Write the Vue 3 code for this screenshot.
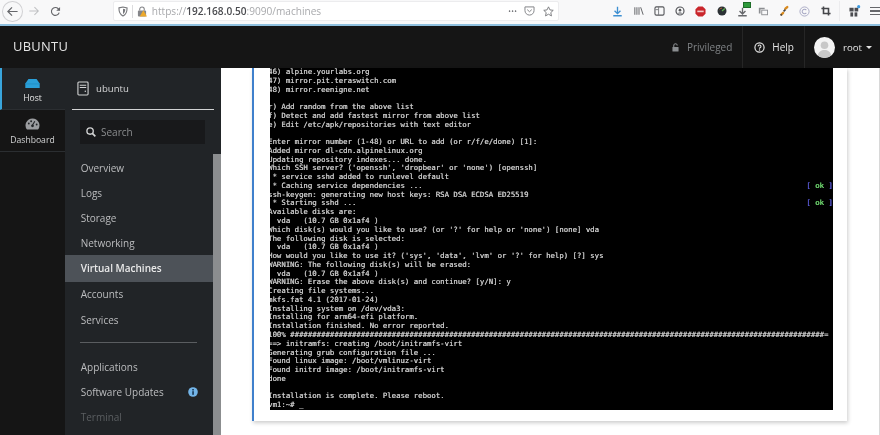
<script setup>
const nav1 = ['Overview', 'Logs', 'Storage', 'Networking']
const nav2 = ['Accounts', 'Services']
const hash = '#'.repeat(121)
const raw = [
  '46) alpine.yourlabs.org',
  '47) mirror.pit.teraswitch.com',
  '48) mirror.reenigne.net',
  '',
  'r) Add random from the above list',
  'f) Detect and add fastest mirror from above list',
  'e) Edit /etc/apk/repositories with text editor',
  '',
  'Enter mirror number (1-48) or URL to add (or r/f/e/done) [1]:',
  'Added mirror dl-cdn.alpinelinux.org',
  'Updating repository indexes... done.',
  "Which SSH server? ('openssh', 'dropbear' or 'none') [openssh]",
  ' * service sshd added to runlevel default',
  { t: ' * Caching service dependencies ...', ok: true },
  'ssh-keygen: generating new host keys: RSA DSA ECDSA ED25519',
  { t: ' * Starting sshd ...', ok: true },
  'Available disks are:',
  '  vda   (10.7 GB 0x1af4 )',
  "Which disk(s) would you like to use? (or '?' for help or 'none') [none] vda",
  'The following disk is selected:',
  '  vda   (10.7 GB 0x1af4 )',
  "How would you like to use it? ('sys', 'data', 'lvm' or '?' for help) [?] sys",
  'WARNING: The following disk(s) will be erased:',
  '  vda   (10.7 GB 0x1af4 )',
  'WARNING: Erase the above disk(s) and continue? [y/N]: y',
  'Creating file systems...',
  'mkfs.fat 4.1 (2017-01-24)',
  'Installing system on /dev/vda3:',
  'Installing for arm64-efi platform.',
  'Installation finished. No error reported.',
  '100% ' + hash + '=',
  '==> initramfs: creating /boot/initramfs-virt',
  'Generating grub configuration file ...',
  'Found linux image: /boot/vmlinuz-virt',
  'Found initrd image: /boot/initramfs-virt',
  'done',
  '',
  'Installation is complete. Please reboot.',
  'vm1:~# _'
]
const lines = raw.map((l) => {
  const o = typeof l === 'string' ? { t: l, ok: false } : l
  return { text: o.ok ? o.t.padEnd(122, ' ') : o.t, ok: o.ok }
})
</script>

<template>
  <div class="page">
    <header class="toolbar">
      <div class="back">
        <svg width="13" height="13" viewBox="0 0 14 14"><path d="M12.5 7H2M6.5 2.5 2 7l4.5 4.5" fill="none" stroke="#66676b" stroke-width="1.300"/></svg>
      </div>
      <div class="tool fwd">
        <svg width="12" height="12" viewBox="0 0 14 14"><path d="M1.5 7H12M7.5 2.5 12 7l-4.5 4.5" fill="none" stroke="#bfc0c3" stroke-width="1.200"/></svg>
      </div>
      <div class="tool reload">
        <svg width="11" height="11" viewBox="0 0 12 12"><path d="M10 7.2A4.3 4.3 0 1 1 9 3l1.400 1.400" fill="none" stroke="#66676b" stroke-width="1.200"/><path d="M11 1v4.200H6.800z" fill="#66676b"/></svg>
      </div>
      <div class="urlbar">
        <svg class="shield" width="10" height="11" viewBox="0 0 11 12"><path d="M1 2 5.500 1 10 2c0 4-1 7.500-4.500 9C2 9.500 1 6 1 2Z" fill="none" stroke="#77787c" stroke-width="1.200"/><path d="M5.500 3 8 3.500C8 6 7.200 7.700 5.500 8.700Z" fill="#77787c"/></svg>
        <span class="sep"></span>
        <svg class="lock" width="10" height="11" viewBox="0 0 11 12"><path d="M3 5V3.500a2.500 2.500 0 0 1 5 0V5" fill="none" stroke="#85868a" stroke-width="1.200"/><rect x="1" y="5" width="9" height="6.500" rx="1" fill="#85868a"/><path d="M7 4.500 11 11.500H3Z" fill="#eda92b"/></svg>
        <span class="url"><span class="dim">https://</span><span class="host">192.168.0.50</span><span class="dim">:9090/machines</span></span>
        <span class="spacer"></span>
        <span class="dots">•••</span>
        <svg class="pocket" width="11" height="10" viewBox="0 0 12 11"><path d="M1 1h10v4a5 5 0 0 1-10 0Z" fill="none" stroke="#85868a" stroke-width="1.100"/><path d="M3.500 4 6 6.300 8.500 4" fill="none" stroke="#85868a" stroke-width="1.100"/></svg>
        <svg class="star" width="11" height="11" viewBox="0 0 13 13"><path d="m6.500 1 1.700 3.600 3.900.5-2.900 2.700.8 3.900-3.500-2-3.500 2 .8-3.900L.9 5.100l3.900-.5Z" fill="none" stroke="#77787c" stroke-width="1.100"/></svg>
      </div>
      <div class="exts">
        <span class="ext"><svg width="11" height="11" viewBox="0 0 13 13"><path d="M6.500 1v8M3 5.500l3.500 3.500L10 5.500M1.500 11.500h10" fill="none" stroke="#3d8fd1" stroke-width="1.600"/></svg></span>
        <span class="ext"><svg width="10" height="10" viewBox="0 0 12 11"><path d="M1 1v9M3.500 1v9M6 1v9M8 1l3 9" fill="none" stroke="#66676b" stroke-width="1.200"/></svg></span>
        <span class="ext"><svg width="11" height="10" viewBox="0 0 12 11"><rect x="1" y="1" width="10" height="9" rx="1.500" fill="none" stroke="#55565a" stroke-width="1.200"/><path d="M5 1v9M1.500 4h3.500" stroke="#77787c" stroke-width="1"/></svg></span>
        <span class="ext"><svg width="10" height="10" viewBox="0 0 12 12"><circle cx="6" cy="6" r="4.800" fill="none" stroke="#55565a" stroke-width="1.400"/><circle cx="6" cy="5" r="1.600" fill="#55565a"/><path d="M3.300 9c.6-1.600 4.800-1.600 5.400 0" fill="#55565a"/></svg></span>
        <span class="ext"><svg width="11" height="11" viewBox="0 0 12 12"><path d="M3.600 .5h4.800L11.500 3.600v4.800L8.400 11.500H3.600L.5 8.400V3.600Z" fill="#c9252b"/><rect x="2.500" y="5" width="7" height="1.800" fill="#f3c9c9"/></svg></span>
        <span class="ext"><svg width="10" height="10" viewBox="0 0 12 12"><circle cx="6" cy="6" r="5.400" fill="#2a3034"/><path d="M6 6 9.500 3" stroke="#5fb04f" stroke-width="1.400"/><path d="M3 4a4 4 0 0 1 3-1.500" fill="none" stroke="#c9703a"/></svg></span>
        <span class="ext"><svg width="11" height="11" viewBox="0 0 13 13"><path d="M6.500 2v7M3 6l3.500 3.500L10 6M1.500 11.500h10" fill="none" stroke="#66676b" stroke-width="1.600"/></svg><i class="badge"></i></span>
        <span class="ext"><svg width="10" height="10" viewBox="0 0 12 12"><path d="M1 2h7v2H3v5H1Z" fill="#8c8e92"/><rect x="4.500" y="5" width="7" height="5.500" fill="none" stroke="#8c8e92" stroke-width="1.100"/></svg></span>
        <span class="ext"><svg width="11" height="12" viewBox="0 0 12 13"><path d="M4.500 8.500 2.700 10.300M7 4 9 2.200" stroke="#d98a1f" stroke-width="2.600" stroke-linecap="round"/><path d="M3 11.500 1.800 10M5 7l2-2" stroke="#444" stroke-width="1.800"/></svg></span>
        <span class="ext"><svg width="11" height="11" viewBox="0 0 12 12"><circle cx="6" cy="6" r="5" fill="none" stroke="#a7a8c4" stroke-width="1"/><path d="M8 4.500a2.500 2.500 0 1 0 0 3" fill="none" stroke="#a7a8c4" stroke-width="1.100"/></svg></span>
        <span class="ext"><svg width="10" height="10" viewBox="0 0 12 12"><path d="M3 .5V9h8.500M.5 3H9v8.500" fill="none" stroke="#45464a" stroke-width="1.900"/></svg></span>
      </div>
      <span class="tool-sep"></span>
      <span class="puzzle"><svg width="12" height="12" viewBox="0 0 13 13"><rect x="0.500" y="3" width="4.500" height="4" fill="#4b4c50"/><rect x="6" y="3" width="4" height="4" fill="#4b4c50"/><rect x="1.500" y="8" width="3" height="4.500" fill="#4b4c50"/><rect x="6" y="8" width="3" height="4.500" fill="#4b4c50"/><circle cx="10.500" cy="1.800" r="1.700" fill="#3d9ae0"/></svg></span>
      <span class="burger"><i></i><i></i><i></i></span>
    </header>

    <div class="masthead">
      <span class="brand">UBUNTU</span>
      <span class="spacer"></span>
      <div class="m-item priv">
        <svg width="7" height="9" viewBox="0 0 8 10"><path d="M2 4.500V2.700a2 2 0 0 1 4 0" fill="none" stroke="#8a8d90" stroke-width="1.200"/><rect x="0.500" y="4.500" width="7" height="5" rx=".6" fill="#8a8d90"/></svg>
        <span>Privileged</span>
      </div>
      <div class="m-item help">
        <svg width="11" height="11" viewBox="0 0 12 12"><circle cx="6" cy="6" r="5" fill="none" stroke="#e4e4e4" stroke-width="1.300"/><path d="M4.400 4.800A1.600 1.600 0 1 1 6 6.500v.8" fill="none" stroke="#e4e4e4" stroke-width="1.200"/><circle cx="6" cy="8.800" r=".8" fill="#e4e4e4"/></svg>
        <span>Help</span>
      </div>
      <div class="m-item user">
        <svg class="avatar" width="21" height="21" viewBox="0 0 21 21"><circle cx="10.500" cy="10.500" r="10.500" fill="#f4f4f4"/><circle cx="10.500" cy="8.300" r="3.800" fill="#c8c8c8"/><path d="M3.800 18.500c.6-7.500 12.800-7.500 13.400 0A10.500 10.500 0 0 1 3.800 18.500Z" fill="#c8c8c8"/></svg>
        <span>root</span>
        <i class="caret"></i>
      </div>
    </div>

    <div class="body">
      <aside class="tabs">
        <div class="tab active">
          <svg width="15" height="9" viewBox="0 0 16 10"><path d="M3.500 0h9L16 5v5H0V5Z" fill="#2a9fd8"/><path d="M0 5.500h16" stroke="#1a84b8" stroke-width=".6"/></svg>
          <span>Host</span>
        </div>
        <div class="tab">
          <svg width="15" height="12" viewBox="0 0 16 13"><path d="M8 .5a7.500 7.500 0 0 1 6 12H2A7.500 7.500 0 0 1 8 .5Z" fill="#9a9c9f"/><path d="M8 7.500 10.500 3.500" stroke="#212427" stroke-width="1.200"/><circle cx="4" cy="6" r="1" fill="#212427"/><circle cx="6.500" cy="3.500" r="1" fill="#212427"/><circle cx="12.500" cy="7" r="1" fill="#212427"/><circle cx="8" cy="8.500" r="1.500" fill="#212427"/></svg>
          <span>Dashboard</span>
        </div>
      </aside>

      <nav class="side">
        <div class="side-inner">
          <div class="hostrow">
            <svg width="12" height="15" viewBox="0 0 13 16"><rect x="1" y="1" width="11" height="14" rx="1" fill="none" stroke="#d2d3d4" stroke-width="1.200"/><path d="M3 4.500h7M3 7h7" stroke="#d2d3d4" stroke-width="1.100"/><circle cx="9" cy="11" r=".8" fill="#d2d3d4"/></svg>
            <span>ubuntu</span>
          </div>
          <div class="search">
            <svg width="10" height="10" viewBox="0 0 11 11"><circle cx="4.500" cy="4.500" r="3.500" fill="none" stroke="#d2d3d4" stroke-width="1.500"/><path d="m7 7 3.300 3.300" stroke="#d2d3d4" stroke-width="1.800"/></svg>
            <span>Search</span>
          </div>
          <ul class="menu first">
            <li v-for="n in nav1" :key="n">{{ n }}</li>
            <li class="current">Virtual Machines</li>
            <li v-for="n in nav2" :key="n">{{ n }}</li>
          </ul>
          <div class="rule"></div>
          <ul class="menu">
            <li>Applications</li>
            <li class="upd">
              <span>Software Updates</span>
              <svg width="10" height="10" viewBox="0 0 10 10"><circle cx="5" cy="5" r="4.800" fill="#73b5e8"/><rect x="4.200" y="4.200" width="1.700" height="3.600" fill="#1d3e5c"/><rect x="4.200" y="2" width="1.700" height="1.500" fill="#1d3e5c"/></svg>
            </li>
            <li class="faded">Terminal</li>
          </ul>
        </div>
        <div class="scroll"><div class="thumb"></div></div>
      </nav>

      <main class="main">
        <section class="card">
          <div class="term">
            <div v-for="(l, i) in lines" :key="i" class="tl">{{ l.text }}<template v-if="l.ok"><span class="br">[</span><span class="ok"> ok </span><span class="br">]</span></template></div>
          </div>
        </section>
        <div class="edge"></div>
      </main>
    </div>
  </div>
</template>

<style scoped>
.page {
  width: 880px;
  height: 435px;
  overflow: hidden;
  display: flex;
  flex-direction: column;
  background: #fff;
  font-family: "Open Sans", "Liberation Sans", sans-serif;
  filter: blur(0.35px);
}
.spacer { flex: 1; }

.toolbar {
  height: 26px;
  box-sizing: border-box;
  flex: none;
  display: flex;
  align-items: center;
  background: #f8f8f9;
  border-bottom: 2px solid #8fc0df;
  padding: 0 0 2px 3px;
}
.back {
  width: 21px;
  height: 21px;
  margin-left: -1px;
  border: 1px solid #d0d0d3;
  border-radius: 50%;
  box-sizing: border-box;
  display: flex;
  align-items: center;
  justify-content: center;
}
.tool { display: flex; align-items: center; justify-content: center; }
.fwd { width: 13px; margin-left: 5px; }
.reload { width: 12px; margin-left: 9px; }
.urlbar {
  margin-left: 52px;
  width: 453px;
  height: 20px;
  box-sizing: border-box;
  background: #fff;
  border: 1px solid #ececee;
  border-radius: 2px;
  display: flex;
  align-items: center;
  padding-left: 4px;
}
.sep { width: 1px; height: 13px; background: #dcdcde; margin: 0 4px 0 4px; }
.lock { margin-left: 0; }
.url { margin-left: 4.500px; font-size: 10.100px; white-space: nowrap; font-family: "Open Sans", sans-serif; }
.dim { color: #a8a9ac; }
.host { color: #4a4b4f; font-weight: 600; }
.dots { color: #77787c; font-size: 7px; letter-spacing: 0.4px; margin-right: 7px; }
.pocket { margin-right: 8px; }
.star { margin-right: 4px; }
.exts { margin-left: 48px; display: flex; }
.ext { width: 20.8px; display: flex; align-items: center; justify-content: center; position: relative; }
.badge {
  position: absolute;
  left: 11px;
  top: -3px;
  width: 8px;
  height: 6px;
  background: #2f9a3c;
  border: 1px solid #1d6d28;
  box-sizing: border-box;
}
.tool-sep { width: 1px; height: 20px; background: #ececee; margin-left: 3px; }
.puzzle { margin-left: 9px; display: flex; }
.burger { margin-left: 9px; display: flex; flex-direction: column; gap: 2px; width: 10px; }
.burger i { height: 1.500px; background: #66676b; display: block; }

.masthead {
  height: 42px;
  flex: none;
  background: #151515;
  display: flex;
  align-items: center;
  color: #e4e4e4;
  font-size: 10px;
}
.brand { margin-left: 13px; font-size: 12.900px; color: #e6e6e6; letter-spacing: .3px; padding-bottom: 2px; }
.m-item { height: 42px; display: flex; align-items: center; box-sizing: border-box; }
.priv { color: #7f8285; gap: 8px; padding-right: 10px; }
.help { border-left: 1px solid #262626; border-right: 1px solid #262626; padding: 0 10px 0 11px; gap: 7px; }
.user { padding-left: 9px; width: 75px; font-size: 9.6px; }
.user span { margin-left: 8px; }
.caret {
  margin-left: 4px;
  border-left: 3px solid transparent;
  border-right: 3px solid transparent;
  border-top: 3px solid #e4e4e4;
}

.body { flex: 1; display: flex; min-height: 0; }
.tabs { width: 65px; flex: none; background: #151515; }
.tab {
  height: 42px;
  box-sizing: border-box;
  border-bottom: 1px solid #2b2e31;
  display: flex;
  flex-direction: column;
  align-items: center;
  justify-content: center;
  gap: 4px;
  color: #d2d3d4;
  font-size: 8.600px;
  padding-top: 3px;
}
.tab.active { background: #212427; border-left: 2px solid #39a5dc; padding-right: 2px; padding-top: 6px; color: #e4e4e4; }

.side { width: 156px; flex: none; display: flex; background: #212427; }
.side-inner { width: 148px; flex: none; }
.hostrow {
  margin: 0 0 0 7px;
  width: 142px;
  height: 41.500px;
  box-sizing: border-box;
  border-bottom: 1px solid #d2d3d4;
  display: flex;
  align-items: center;
  gap: 7px;
  padding-left: 5px;
  color: #d8d8d9;
  font-size: 9.600px;
  padding-top: 1px;
}
.search {
  margin: 10.500px 8px 0 15px;
  height: 24px;
  background: #18191b;
  display: flex;
  align-items: center;
  gap: 5px;
  padding-left: 6px;
  color: #8b8d8f;
  font-size: 10px;
}
.menu { list-style: none; margin: 0; padding: 0; }
.menu.first { margin-top: 11px; }
.menu li {
  height: 25.200px;
  display: flex;
  align-items: center;
  padding-left: 15.700px;
  color: #bcbdbf;
  font-size: 10px;
}
.menu li.current { background: #4d5258; color: #eaeaea; font-weight: 600; height: 27px; margin: -1px 0 0; }
.rule { height: 1px; background: #5a5d60; margin: 10px 16px 11px 15px; }
.upd { justify-content: space-between; padding-right: 15px; }
.faded { color: #5b5e61 !important; }
.scroll { width: 8px; flex: none; padding-top: 86px; box-sizing: border-box; }
.thumb { height: 100%; background: #8b8d8f; }

.main { flex: 1; display: flex; background: #fff; min-width: 0; }
.card {
  margin-left: 31px;
  width: 595px;
  height: 353px;
  box-sizing: border-box;
  border-left: 2px solid #3f80cc;
  padding: 0 15px 0 15.500px;
  background: #fff;
  box-shadow: 1px 2px 4px rgba(0, 0, 0, 0.2);
  flex: none;
}
.term {
  width: 563px;
  height: 342px;
  background: #000;
  overflow: hidden;
  font-family: "DejaVu Sans Mono", "Liberation Mono", monospace;
  font-size: 7.330px;
  line-height: 8.780px;
  color: #c4c4c4;
  text-shadow: 0.3px 0 0 currentColor;
}
.tl { white-space: pre; height: 8.780px; margin-left: -1.500px; }
.br { color: #5a5ad8; }
.ok { color: #6fd86f; }
.edge { margin-left: auto; width: 1px; background: #d8d8d8; }
</style>
